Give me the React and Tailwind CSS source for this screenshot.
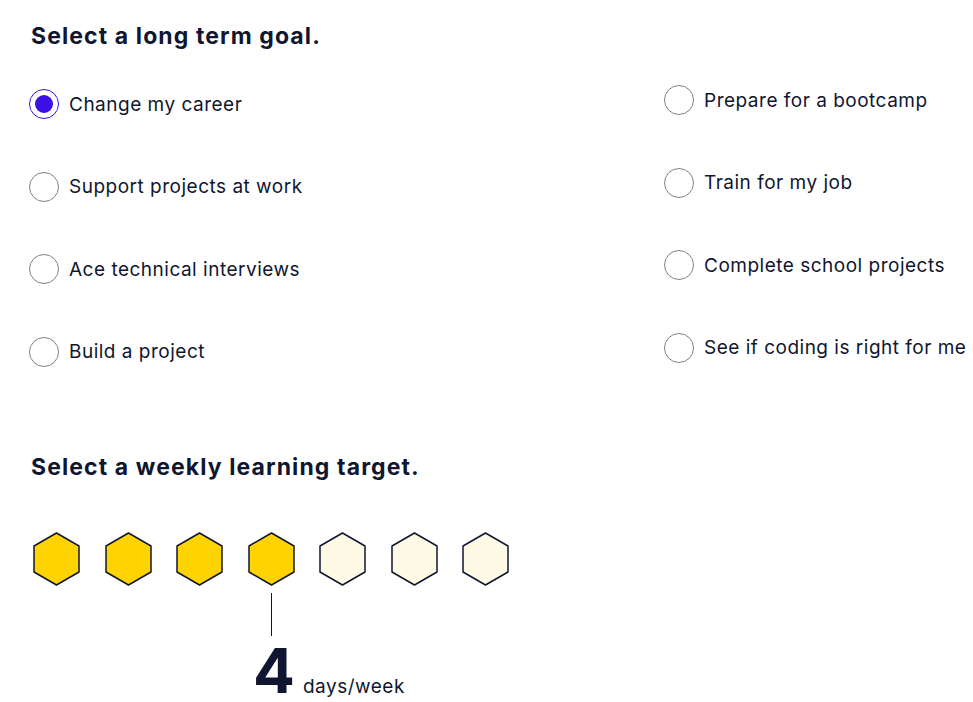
import React, { useState } from 'react';

const leftGoals = [
  'Change my career',
  'Support projects at work',
  'Ace technical interviews',
  'Build a project',
];

const rightGoals = [
  'Prepare for a bootcamp',
  'Train for my job',
  'Complete school projects',
  'See if coding is right for me',
];

function Radio({ label, checked, onSelect }) {
  return (
    <button type="button" onClick={onSelect} className="flex items-center gap-[10px] h-[30px] text-left">
      <span
        className={
          'flex items-center justify-center w-[30px] h-[30px] rounded-full border-[1.5px] bg-white shrink-0 ' +
          (checked ? 'border-[#3a10e5]' : 'border-[#828285]')
        }
      >
        {checked && <span className="w-[18px] h-[18px] rounded-full bg-[#3a10e5]" />}
      </span>
      <span className="text-[19px] leading-none tracking-[0.5px] text-[#10162f] whitespace-nowrap">{label}</span>
    </button>
  );
}

function Hex({ filled, onClick }) {
  return (
    <button type="button" onClick={onClick} className="block">
      <svg width="47" height="54" viewBox="0 0 47 54">
        <polygon
          points="23.5,1 46,14 46,40 23.5,53 1,40 1,14"
          fill={filled ? '#ffd300' : '#fffae5'}
          stroke="#10162f"
          strokeWidth="1.5"
          strokeLinejoin="round"
        />
      </svg>
    </button>
  );
}

export default function App() {
  const [goal, setGoal] = useState('Change my career');
  const [days, setDays] = useState(4);

  return (
    <div className="w-[973px] h-[702px] overflow-hidden bg-white text-[#10162f] font-['Inter',sans-serif] pl-[29px] pt-[20px]">
      <h2 className="text-[23px] leading-[32px] font-bold tracking-[1.1px] ml-[2px]">Select a long term goal.</h2>

      <div className="flex mt-[37px]">
        <div className="w-[635px] flex flex-col gap-[52.5px]">
          {leftGoals.map((g) => (
            <Radio key={g} label={g} checked={goal === g} onSelect={() => setGoal(g)} />
          ))}
        </div>
        <div className="flex flex-col gap-[52.5px] -mt-[4px]">
          {rightGoals.map((g) => (
            <Radio key={g} label={g} checked={goal === g} onSelect={() => setGoal(g)} />
          ))}
        </div>
      </div>

      <h2 className="text-[23px] leading-[32px] font-bold tracking-[1.1px] ml-[2px] mt-[84px]">
        Select a weekly learning target.
      </h2>

      <div className="flex gap-[24.5px] mt-[49px] ml-[4px]">
        {[1, 2, 3, 4, 5, 6, 7].map((n) => (
          <Hex key={n} filled={n <= days} onClick={() => setDays(n)} />
        ))}
      </div>

      <div className="ml-[242px] mt-[7px] w-px h-[43px] bg-[#10162f]" />

      <div className="flex items-baseline ml-[224px] mt-[8px]">
        <span className="text-[62px] leading-[54px] font-bold">{days}</span>
        <span className="text-[19px] tracking-[0.5px] ml-[8px]">days/week</span>
      </div>
    </div>
  );
}
